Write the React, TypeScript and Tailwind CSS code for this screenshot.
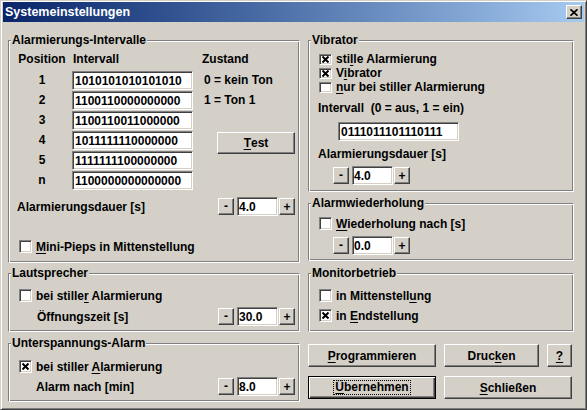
import React from "react";

const raised =
  "bg-[#d4d0c8] border border-t-white border-l-white border-r-[#404040] border-b-[#404040] shadow-[inset_-1px_-1px_0_#808080,inset_1px_1px_0_#d4d0c8]";
const sunken =
  "bg-white border border-t-[#808080] border-l-[#808080] border-r-white border-b-white shadow-[inset_1px_1px_0_#404040,inset_-1px_-1px_0_#d4d0c8]";

function U({ children }: { children: React.ReactNode }) {
  return <span className="underline underline-offset-2 decoration-1">{children}</span>;
}

function Check({ checked = false, compact = false }: { checked?: boolean; compact?: boolean }) {
  return (
    <span className={`${sunken} shrink-0 flex items-center justify-center w-[13px] ${compact ? "h-[11px]" : "h-[13px]"}`}>
      {checked && (
        <svg width="7" height="7" viewBox="0 0 7 7">
          <path d="M0.5 0.5L6.5 6.5M6.5 0.5L0.5 6.5" stroke="black" strokeWidth="2" />
        </svg>
      )}
    </span>
  );
}

function CheckRow({
  checked = false,
  compact = false,
  className = "",
  children,
}: {
  checked?: boolean;
  compact?: boolean;
  className?: string;
  children: React.ReactNode;
}) {
  return (
    <div className={`flex items-center pl-[10px] ${compact ? "h-[14px]" : "h-[13px]"} ${className}`}>
      <Check checked={checked} compact={compact} />
      <span className="ml-[4px] whitespace-nowrap">{children}</span>
    </div>
  );
}

function Group({ title, className = "", children }: { title: string; className?: string; children: React.ReactNode }) {
  return (
    <div
      className={`flex flex-col border border-t-[#808080] border-l-[#808080] border-r-white border-b-white shadow-[inset_1px_1px_0_white,inset_-1px_-1px_0_#808080] ${className}`}
    >
      <span className="self-start -mt-[8px] ml-[2px] px-[1px] h-[14px] bg-[#d4d0c8] whitespace-nowrap">{title}</span>
      {children}
    </div>
  );
}

function Spin({ value }: { value: string }) {
  return (
    <div className="flex items-center shrink-0">
      <span className={`${raised} w-[16px] h-[17px] flex items-center justify-center leading-none pb-[1px]`}>-</span>
      <span className={`${sunken} ml-[3px] w-[41px] h-[19px] flex items-center pl-[1px]`}>{value}</span>
      <span className={`${raised} ml-[1px] w-[16px] h-[17px] flex items-center justify-center leading-none`}>+</span>
    </div>
  );
}

function Btn({ className = "", children }: { className?: string; children: React.ReactNode }) {
  return (
    <button type="button" className={`${raised} cursor-default flex items-center justify-center ${className}`}>
      {children}
    </button>
  );
}

const intervals = [
  ["1", "1010101010101010"],
  ["2", "1100110000000000"],
  ["3", "1100110011000000"],
  ["4", "1011111110000000"],
  ["5", "1111111100000000"],
  ["n", "1100000000000000"],
];

export default function App() {
  return (
    <div className="w-[587px] h-[410px] overflow-hidden bg-[#d4d0c8] border border-t-[#d4d0c8] border-l-[#d4d0c8] border-r-[#404040] border-b-[#404040] shadow-[inset_1px_1px_0_white,inset_-1px_-1px_0_#808080] pt-[1px] px-[2px] flex flex-col font-['Liberation_Sans',Arial,sans-serif] font-bold text-[12px] leading-[14px] text-black select-none">
      {/* title bar */}
      <div className="h-[20px] shrink-0 flex items-center justify-between bg-linear-to-r from-[#0a246a] to-[#a6caf0] pl-[2px] pr-[2px]">
        <span className="text-white text-[12.5px]">Systemeinstellungen</span>
        <span className={`${raised} w-[16px] h-[14px] flex items-center justify-center`}>
          <svg width="8" height="7" viewBox="0 0 8 7">
            <path d="M0.5 0.3L7.5 6.7M7.5 0.3L0.5 6.7" stroke="black" strokeWidth="1.7" />
          </svg>
        </span>
      </div>

      <div className="flex pt-[18px] pl-[5px]">
        {/* left column */}
        <div className="flex flex-col w-[292px]">
          <Group title="Alarmierungs-Intervalle" className="h-[223px]">
            <div className="flex mt-[5px] pl-[10px]">
              <div className="flex flex-col items-center w-[46px]">
                <div className="h-[14px] whitespace-nowrap">Position</div>
                <div className="mt-[5px] flex flex-col gap-[1px]">
                  {intervals.map(([n]) => (
                    <div key={n} className="h-[19px] leading-[19px] text-center">
                      {n}
                    </div>
                  ))}
                </div>
              </div>
              <div className="ml-[7px] w-[121px] flex flex-col">
                <div className="h-[14px] pl-[1px]">Intervall</div>
                <div className="mt-[5px] flex flex-col gap-[1px]">
                  {intervals.map(([n, v]) => (
                    <div key={n} className={`${sunken} h-[19px] w-[121px] flex items-center pl-[2px]`}>
                      {v}
                    </div>
                  ))}
                </div>
              </div>
              <div className="ml-[9px] flex flex-col items-start">
                <div className="h-[14px]">Zustand</div>
                <div className="mt-[5px] h-[19px] leading-[19px] pl-[2px] whitespace-nowrap">0 = kein Ton</div>
                <div className="mt-[1px] h-[19px] leading-[19px] pl-[2px] whitespace-nowrap">1 = Ton 1</div>
                <Btn className="mt-[22px] ml-[15px] w-[78px] h-[22px]">
                  <U>T</U>est
                </Btn>
              </div>
            </div>
            <div className="flex items-center justify-between mt-[7px] pl-[8px] pr-[4px] h-[19px]">
              <span>Alarmierungsdauer [s]</span>
              <Spin value="4.0" />
            </div>
            <CheckRow className="mt-[24px]">
              <U>M</U>ini-Pieps in Mittenstellung
            </CheckRow>
          </Group>

          <Group title="Lautsprecher" className="mt-[10px] h-[59px]">
            <CheckRow className="mt-[9px]">
              bei stille<U>r</U> Alarmierung
            </CheckRow>
            <div className="flex items-center justify-between mt-[5px] pl-[28px] pr-[4px] h-[19px]">
              <span>Öffnungszeit [s]</span>
              <Spin value="30.0" />
            </div>
          </Group>

          <Group title="Unterspannungs-Alarm" className="mt-[11px] h-[59px]">
            <CheckRow checked className="mt-[10px]">
              bei stiller <U>A</U>larmierung
            </CheckRow>
            <div className="flex items-center justify-between mt-[4px] pl-[27px] pr-[4px] h-[19px]">
              <span>Alarm nach [min]</span>
              <Spin value="8.0" />
            </div>
          </Group>
        </div>

        {/* right column */}
        <div className="flex flex-col w-[266px] ml-[8px]">
          <Group title="Vibrator" className="h-[152px]">
            <div className="mt-[5px] flex flex-col">
              <CheckRow checked compact>
                sti<U>l</U>le Alarmierung
              </CheckRow>
              <CheckRow checked compact>
                V<U>i</U>brator
              </CheckRow>
              <CheckRow compact>
                <U>n</U>ur bei stiller Alarmierung
              </CheckRow>
            </div>
            <div className="mt-[7px] pl-[9px] h-[14px] whitespace-pre">Intervall  (0 = aus, 1 = ein)</div>
            <div className={`${sunken} mt-[7px] ml-[29px] w-[121px] h-[19px] flex items-center pl-[2px]`}>
              0111011101110111
            </div>
            <div className="mt-[6px] pl-[9px] h-[14px]">Alarmierungsdauer [s]</div>
            <div className="mt-[5px] pl-[24px] flex">
              <Spin value="4.0" />
            </div>
          </Group>

          <Group title="Alarmwiederholung" className="mt-[11px] h-[58px]">
            <CheckRow className="mt-[7px]">
              <U>W</U>iederholung nach [s]
            </CheckRow>
            <div className="mt-[6px] pl-[24px] flex">
              <Spin value="0.0" />
            </div>
          </Group>

          <Group title="Monitorbetrieb" className="mt-[12px] h-[59px]">
            <CheckRow className="mt-[9px]">
              in Mittenstell<U>u</U>ng
            </CheckRow>
            <CheckRow checked className="mt-[7px]">
              in <U>E</U>ndstellung
            </CheckRow>
          </Group>

          <div className="flex mt-[12px] h-[23px]">
            <Btn className="w-[128px] h-[23px]">
              <U>P</U>rogrammieren
            </Btn>
            <Btn className="ml-[8px] w-[95px] h-[23px]">
              Druc<U>k</U>en
            </Btn>
            <Btn className="ml-[8px] w-[25px] h-[23px]">
              <U>?</U>
            </Btn>
          </div>
          <div className="flex mt-[9px] h-[23px]">
            <button
              type="button"
              className="cursor-default w-[128px] h-[23px] border border-black bg-[#d4d0c8] shadow-[inset_1px_1px_0_white,inset_-1px_-1px_0_#404040,inset_-2px_-2px_0_#808080] flex items-center justify-center"
            >
              <span className="border border-dotted border-black px-[1px] h-[15px] leading-[13px]">
                <U>Ü</U>bernehmen
              </span>
            </button>
            <Btn className="ml-[8px] w-[128px] h-[23px]">
              <U>S</U>chließen
            </Btn>
          </div>
        </div>
      </div>
    </div>
  );
}
